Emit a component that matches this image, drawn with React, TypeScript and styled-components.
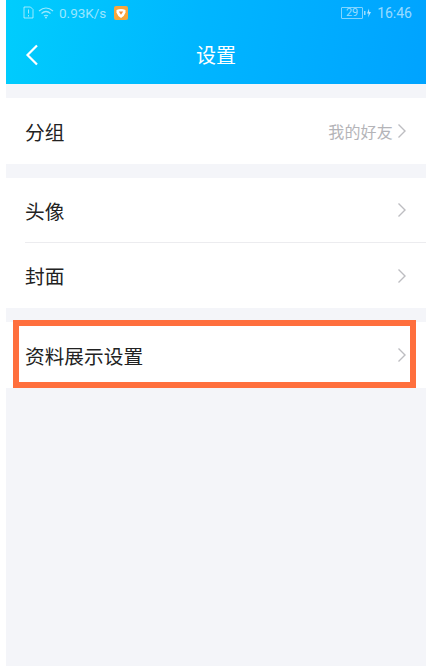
import React from 'react';
import styled, { createGlobalStyle } from 'styled-components';

const GlobalStyle = createGlobalStyle`
  html, body {
    margin: 0;
    padding: 0;
    background: #fff;
  }
  body {
    font-family: "Liberation Sans", "Noto Sans CJK SC", sans-serif;
  }
`

const Screen = styled.div`
  width: 420px;
  height: 666px;
  margin-left: 6px;
  background: #f4f5f9;
  display: flex;
  flex-direction: column;
  overflow: hidden;
`
const Header = styled.header`
  height: 84px;
  flex: none;
  background: linear-gradient(100deg, #00cdfd 0%, #00b6ff 45%, #00a3ff 100%);
  display: flex;
  flex-direction: column;
`
const StatusBar = styled.div`
  height: 25px;
  padding: 0 14px 0 17px;
  display: flex;
  align-items: center;
  color: rgba(255, 255, 255, .6);
  font-family: Roboto, sans-serif;
  font-size: 13.5px;
`
const StatusGroup = styled.div`
  display: flex;
  align-items: center;
  gap: 4px;
`
const Speed = styled.span`
  margin-left: 1px;
`
const Time = styled.span`
  font-size: 14px;
  margin-left: 1px;
`
const Battery = styled.span`
  width: 20px;
  height: 10px;
  border: 1px solid rgba(255, 255, 255, .5);
  border-radius: 1px;
  font-size: 11px;
  line-height: 10px;
  text-align: center;
`
const ShieldIcon = styled.svg`
  margin-left: 4px;
`
const ChargeIcon = styled.svg`
  margin-left: -3px;
`
const Spacer = styled.div`
  flex: 1;
`
const NavBar = styled.div`
  position: relative;
  flex: 1;
  display: flex;
  align-items: center;
  justify-content: center;
  color: #fff;
  font-family: "Noto Sans CJK SC", sans-serif;
  font-size: 20px;
  box-sizing: border-box;
`
const BackIcon = styled.svg`
  position: absolute;
  left: 18px;
  top: 18px;
`
const Group = styled.section`
  margin-top: 14px;
  background: #fff;
  display: flex;
  flex-direction: column;
`
const Row = styled.div<{ $divided?: boolean; $short?: boolean }>`
  position: relative;
  height: ${p => (p.$divided || p.$short ? '65px' : '66px')};
  box-sizing: border-box;
  margin-left: ${p => (p.$divided ? '19px' : '0')};
  padding: 0 19px 0 ${p => (p.$divided ? '0' : '19px')};
  border-bottom: ${p => (p.$divided ? '1px solid #ececef' : 'none')};
  display: flex;
  align-items: center;
  justify-content: space-between;
`
const Label = styled.span`
  font-family: "Noto Sans CJK SC", sans-serif;
  font-size: 19.7px;
  color: #222;
`
const Trailing = styled.div`
  display: flex;
  align-items: center;
  gap: 4px;
  font-family: "Noto Sans CJK SC", sans-serif;
  font-size: 16px;
  letter-spacing: .2px;
  color: #b4b4b8;
`
const Highlight = styled.div`
  position: absolute;
  left: 7px;
  right: 10px;
  top: -2px;
  bottom: 0;
  border: 6px solid #ff6f3d;
  pointer-events: none;
`

const Chevron: React.FC = () => (
  <svg width="10" height="16" viewBox="0 0 10 16" fill="none">
    <path d="M1.5 1.5 L8 8 L1.5 14.5" stroke="#bdbdc1" strokeWidth="1.4" />
  </svg>
)

const App: React.FC = () => {
  return (
    <>
      <GlobalStyle />
      <Screen>
        <Header>
          <StatusBar>
            <StatusGroup>
              <svg width="11" height="13" viewBox="0 0 11 13" fill="none">
                <path d="M1 1 H7.5 L10 3.5 V12 H1 Z" stroke="#fff" strokeOpacity=".6" />
                <path d="M5.5 3.5 V7.5 M5.5 9 V10.5" stroke="#fff" strokeOpacity=".6" />
              </svg>
              <svg width="16" height="13" viewBox="0 0 16 13" fill="none">
                <path d="M1 5 Q8 -1 15 5 M3.5 7.5 Q8 3.5 12.5 7.5 M6 10 Q8 8.5 10 10" stroke="#fff" strokeOpacity=".6" strokeWidth="1.2" />
                <circle cx="8" cy="11.5" r="1" fill="#fff" fillOpacity=".6" />
              </svg>
              <Speed>0.93K/s</Speed>
              <ShieldIcon width="14" height="14" viewBox="0 0 14 14">
                <rect width="14" height="14" rx="2" fill="#f7a63c" />
                <path d="M2.5 4 Q7 2 11.5 4 V6.5 Q10.5 10 7 12 Q3.5 10 2.5 6.5 Z" fill="#fff" />
                <path d="M4.8 5.5 H9.2 L7 8.8 Z" fill="#f58a2e" />
              </ShieldIcon>
            </StatusGroup>
            <Spacer />
            <StatusGroup>
              <Battery>29</Battery>
              <ChargeIcon width="8" height="10" viewBox="0 0 8 10">
                <rect x="0" y="3" width="1.5" height="4" fill="#fff" fillOpacity=".6" />
                <path d="M5 0.5 L3 5.5 H4.7 L4 9.5 L7 4 H5.2 Z" fill="#fff" fillOpacity=".7" />
              </ChargeIcon>
              <Time>16:46</Time>
            </StatusGroup>
          </StatusBar>
          <NavBar>
            <BackIcon width="14" height="24" viewBox="0 0 14 24" fill="none">
              <path d="M13 2.5 L3.5 12 L13 21.5" stroke="#fff" strokeWidth="2.2" />
            </BackIcon>
            设置
          </NavBar>
        </Header>

        <Group>
          <Row>
            <Label>分组</Label>
            <Trailing>我的好友<Chevron /></Trailing>
          </Row>
        </Group>

        <Group>
          <Row $divided>
            <Label>头像</Label>
            <Trailing><Chevron /></Trailing>
          </Row>
          <Row $short>
            <Label>封面</Label>
            <Trailing><Chevron /></Trailing>
          </Row>
        </Group>

        <Group>
          <Row>
            <Label>资料展示设置</Label>
            <Trailing><Chevron /></Trailing>
            <Highlight />
          </Row>
        </Group>
      </Screen>
    </>
  )
}

export default App
